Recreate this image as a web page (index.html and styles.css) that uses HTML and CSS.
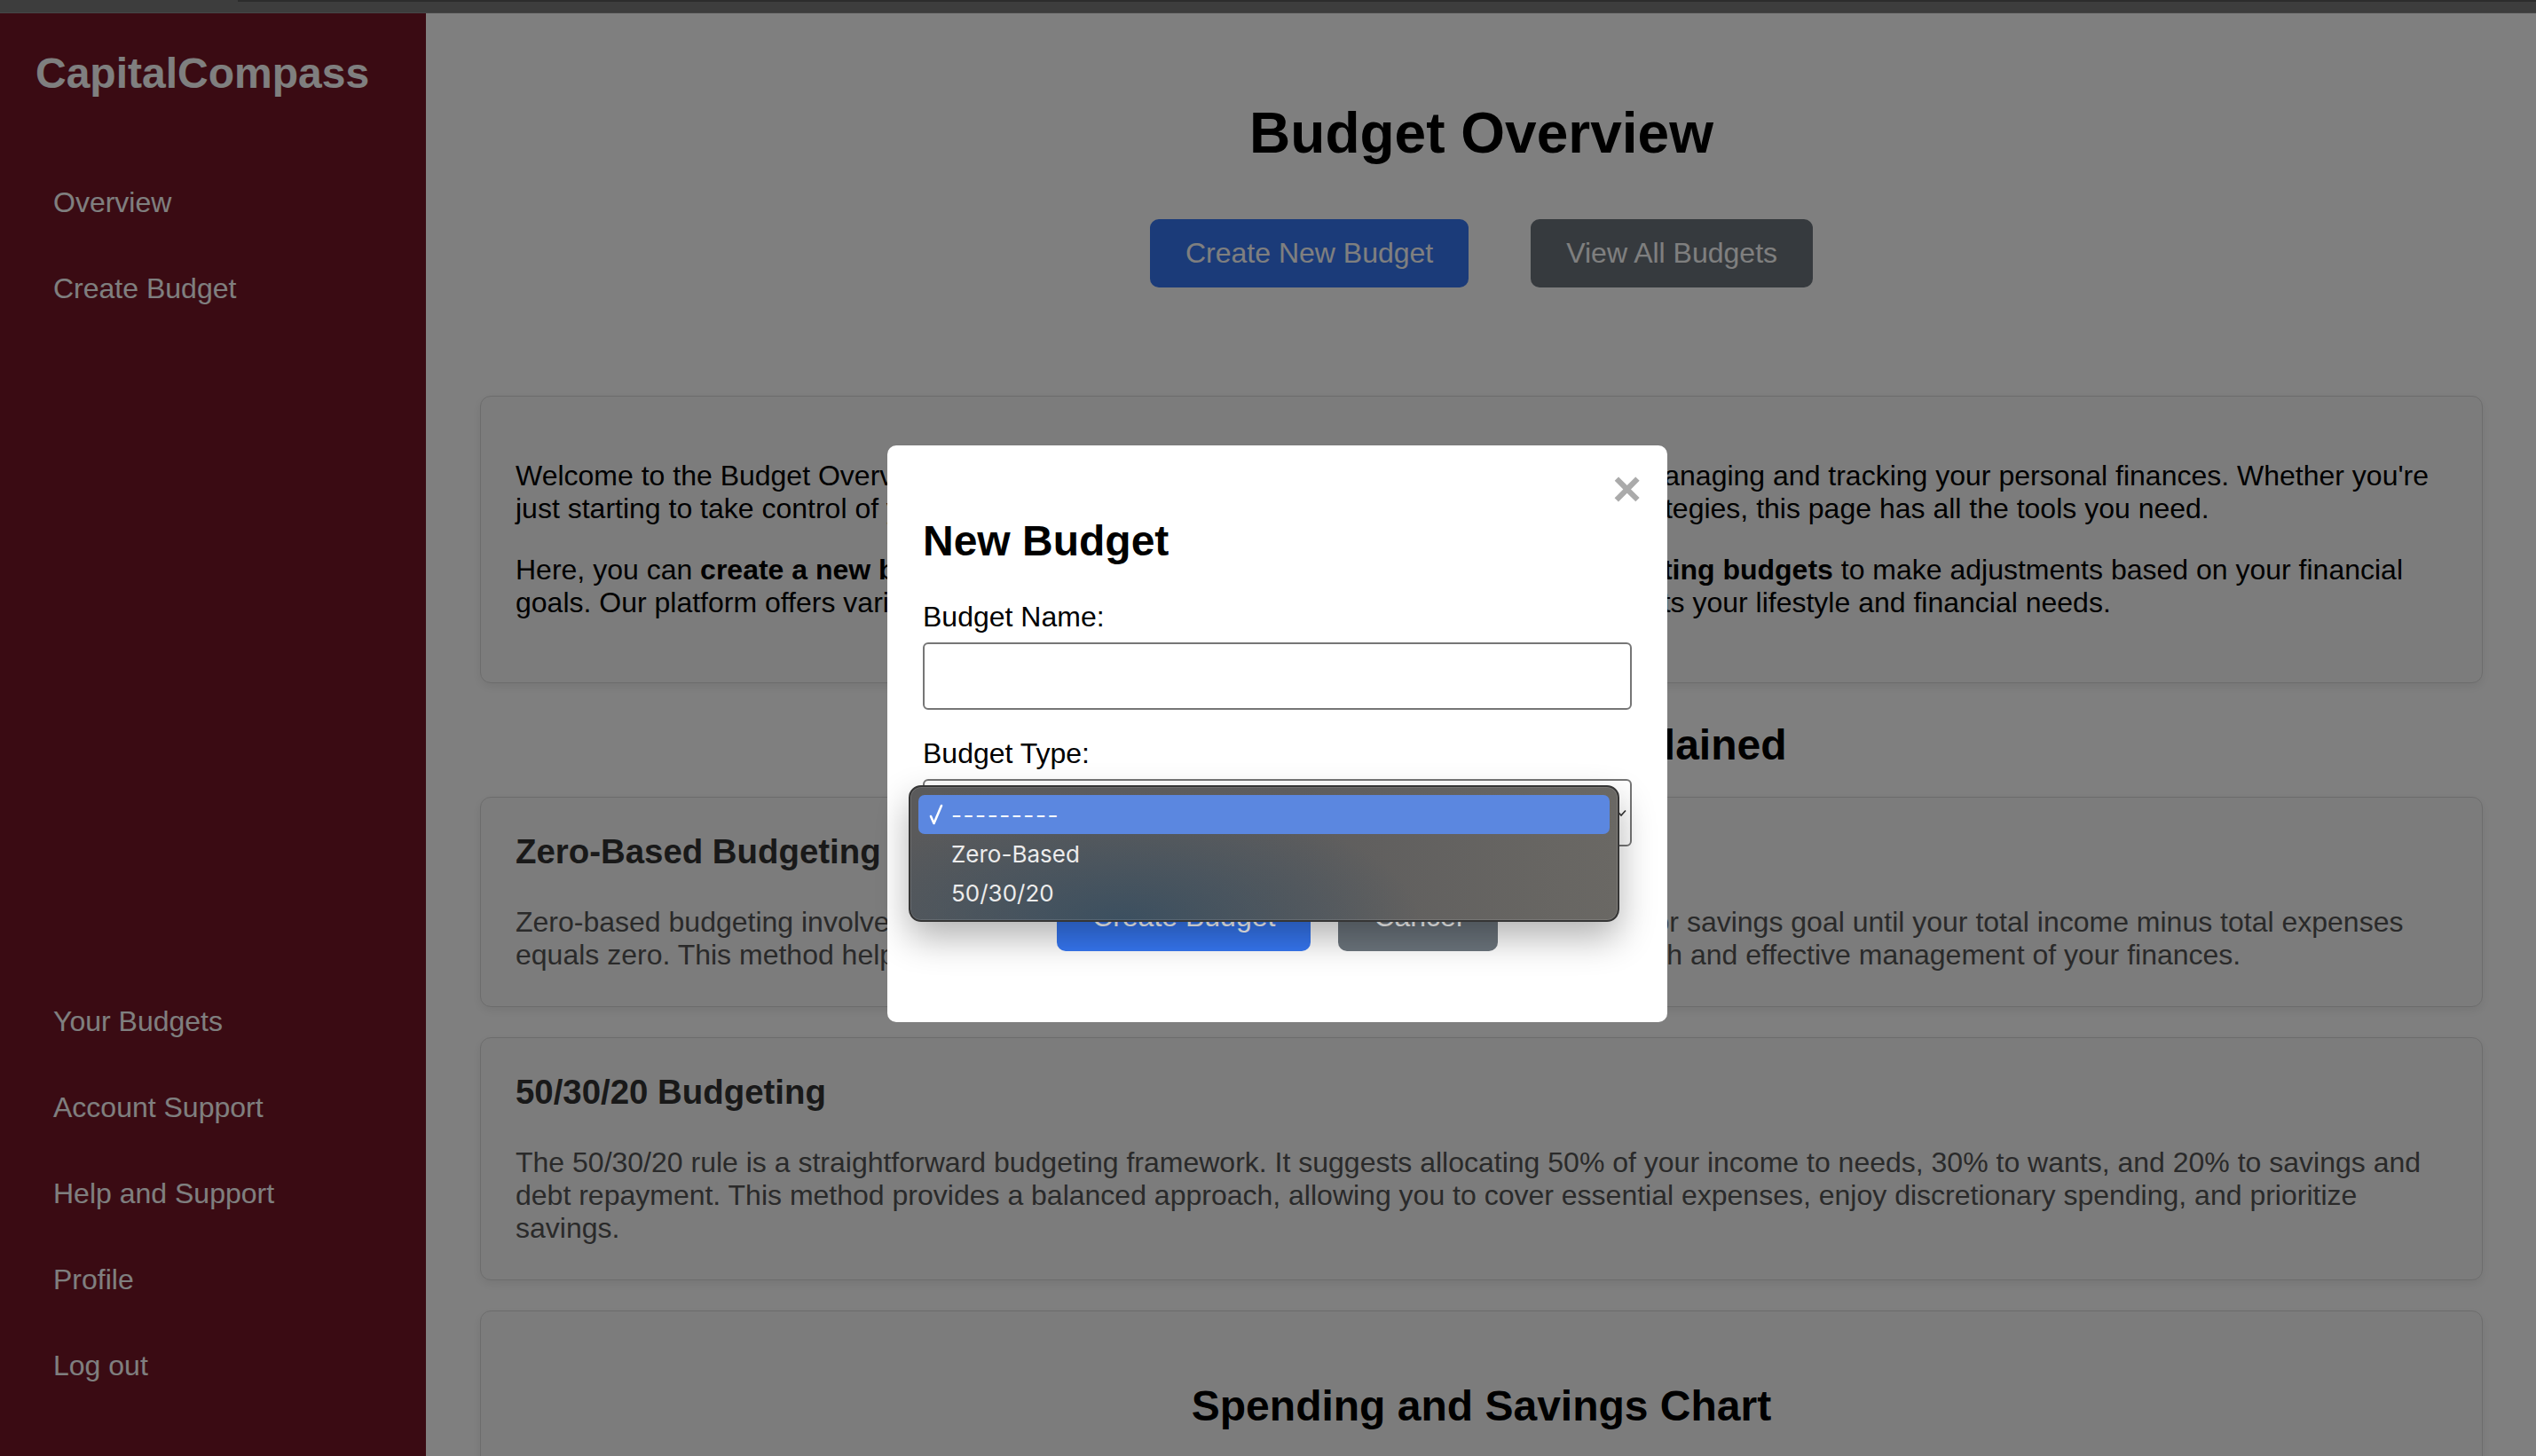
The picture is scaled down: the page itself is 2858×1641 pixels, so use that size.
FILE: index.html
```html
<!DOCTYPE html>
<html lang="en">
<head>
<meta charset="utf-8">
<title>CapitalCompass – Budget Overview</title>
<link rel="stylesheet" href="styles.css">
</head>
<body>
<div class="chrome"><div class="chrome-line"></div></div>
<div class="app">
  <aside class="sidebar">
    <div class="logo">CapitalCompass</div>
    <nav class="nav nav-top">
      <a href="#">Overview</a>
      <a href="#">Create Budget</a>
    </nav>
    <nav class="nav nav-bottom">
      <a href="#">Your Budgets</a>
      <a href="#">Account Support</a>
      <a href="#">Help and Support</a>
      <a href="#">Profile</a>
      <a href="#">Log out</a>
    </nav>
  </aside>
  <main class="content">
    <h1 class="page-title">Budget Overview</h1>
    <div class="actions">
      <button class="btn btn-primary">Create New Budget</button>
      <button class="btn btn-secondary">View All Budgets</button>
    </div>
    <section class="card intro">
      <p>Welcome to the Budget Overview page, your comprehensive one-stop solution for simply managing and tracking your personal finances. Whether you're just starting to take control of your personal finances or looking to refine your budgeting strategies, this page has all the tools you need.</p>
      <p>Here, you can <strong>create a new budget</strong>, <strong>view and edit your active budgets</strong>, or <strong>manage existing budgets</strong> to make adjustments based on your financial goals. Our platform offers various budgeting strategies to help you find the one that best suits your lifestyle and financial needs.</p>
    </section>
    <h2 class="section-title">Budgeting Methods Explained</h2>
    <section class="card strategy">
      <h3>Zero-Based Budgeting</h3>
      <p>Zero-based budgeting involves allocating every dollar of your income to an expense, debt, or savings goal until your total income minus total expenses equals zero. This method helps you gain control over your money, promoting financial growth and effective management of your finances.</p>
    </section>
    <section class="card strategy">
      <h3>50/30/20 Budgeting</h3>
      <p>The 50/30/20 rule is a straightforward budgeting framework. It suggests allocating 50% of your income to needs, 30% to wants, and 20% to savings and debt repayment. This method provides a balanced approach, allowing you to cover essential expenses, enjoy discretionary spending, and prioritize savings.</p>
    </section>
    <section class="card chart">
      <h2>Spending and Savings Chart</h2>
    </section>
  </main>
</div>

<div class="backdrop">
  <div class="modal">
    <span class="close">&times;</span>
    <h2>New Budget</h2>
    <form class="modal-form">
      <label class="field-label" for="budget-name">Budget Name:</label>
      <input class="text-input" id="budget-name" type="text">
      <label class="field-label" for="budget-type">Budget Type:</label>
      <div class="select-wrap">
        <select class="select" id="budget-type">
          <option>---------</option>
          <option>Zero-Based</option>
          <option>50/30/20</option>
        </select>
        <svg class="select-arrow" width="12" height="9" viewBox="0 0 12 9"><path d="M1 1.5 L6 7 L11 1.5" fill="none" stroke="#333" stroke-width="1.6"/></svg>
      </div>
      <div class="modal-actions">
        <button type="button" class="btn btn-primary">Create Budget</button>
        <button type="button" class="btn btn-secondary">Cancel</button>
      </div>
    </form>
    <div class="menu">
      <div class="menu-row selected">
        <svg class="check" width="16" height="24" viewBox="0 0 16 24"><path d="M2 14 L5.5 22 L14 2" fill="none" stroke="#fff" stroke-width="2.6" stroke-linecap="round" stroke-linejoin="round"/></svg>
        <span class="dashes">---------</span>
      </div>
      <div class="menu-row">Zero-Based</div>
      <div class="menu-row">50/30/20</div>
    </div>
  </div>
</div>
</body>
</html>
```

FILE: styles.css
```css
* {
  box-sizing: border-box;
}

html,
body {
  margin: 0;
  height: 100%;
}

body {
  font-family: "Liberation Sans", Arial, Helvetica, sans-serif;
  background: #ffffff;
  color: #000000;
  overflow: hidden;
}

/* browser chrome strip */
.chrome {
  height: 15px;
  background: #3d3d3d;
  border-bottom: 1px solid #464646;
}

.chrome-line {
  margin-left: 268px;
  height: 2px;
  background: #2c2c2c;
}

.app {
  display: flex;
  height: calc(100vh - 15px);
}

/* sidebar */
.sidebar {
  width: 480px;
  flex-shrink: 0;
  background: #741626;
  display: flex;
  flex-direction: column;
  padding: 0 40px 53px;
}

.logo {
  margin-top: 40px;
  font-size: 48px;
  font-weight: bold;
  color: #ffffff;
  line-height: normal;
}

.nav {
  display: flex;
  flex-direction: column;
}

.nav-top {
  margin-top: 70px;
}

.nav-bottom {
  margin-top: auto;
}

.nav a {
  display: block;
  padding: 30px 20px;
  font-size: 32px;
  line-height: normal;
  color: #ffffff;
  text-decoration: none;
}

/* main content */
.content {
  flex: 1;
  min-width: 0;
  padding: 0 60px 0 61px;
  overflow: hidden;
}

.page-title {
  margin: 98px 0 60px;
  text-align: center;
  font-size: 64px;
  line-height: normal;
}

.actions {
  display: flex;
  justify-content: center;
  gap: 70px;
}

.btn {
  font-family: inherit;
  font-size: 32px;
  line-height: normal;
  padding: 20px 40px;
  border: none;
  border-radius: 10px;
  color: #ffffff;
}

.btn-primary {
  background: #3677f2;
}

.btn-secondary {
  background: #6c757d;
}

.card {
  background: #f8f8f8;
  border: 1px solid #d9d9d9;
  border-radius: 12px;
  padding: 39px;
  box-shadow: 0 4px 12px rgba(0, 0, 0, 0.08);
}

.intro {
  margin-top: 122px;
}

.intro p {
  margin: 32px 0;
  font-size: 32px;
}

.section-title {
  margin: 42px 0 31px;
  text-align: center;
  font-size: 48px;
  line-height: normal;
}

.strategy {
  margin-bottom: 34px;
}

.strategy h3 {
  margin: 0 0 39px;
  font-size: 38.4px;
  line-height: normal;
  color: #333333;
}

.strategy p {
  margin: 0;
  font-size: 32px;
  color: #555555;
}

.chart h2 {
  margin: 40px 0;
  text-align: center;
  font-size: 48px;
  line-height: normal;
}

/* modal */
.backdrop {
  position: fixed;
  top: 15px;
  left: 0;
  right: 0;
  bottom: 0;
  background: rgba(0, 0, 0, 0.5);
}

.modal {
  position: absolute;
  left: 1000px;
  top: 487px;
  width: 879px;
  padding: 40px;
  background: #ffffff;
  border-radius: 10px;
}

.close {
  position: absolute;
  top: 21px;
  right: 29px;
  font-size: 56px;
  line-height: 56px;
  font-weight: bold;
  color: #aaaaaa;
}

.modal h2 {
  margin: 40px 0;
  font-size: 48px;
  line-height: normal;
}

.modal-form {
  margin: 0 0 40px;
}

.field-label {
  display: block;
  font-size: 32px;
  line-height: normal;
  margin-bottom: 10px;
}

.text-input {
  display: block;
  width: 100%;
  height: 76px;
  margin: 0 0 31px;
  border: 2px solid #767676;
  border-radius: 6px;
  background: #ffffff;
}

.select-wrap {
  position: relative;
  height: 76px;
}

.select {
  display: block;
  width: 100%;
  height: 76px;
  margin: 0;
  padding: 0 20px;
  border: 2px solid #767676;
  border-radius: 6px;
  background: #ffffff;
  font-family: inherit;
  font-size: 28px;
  color: #000000;
  appearance: none;
  -webkit-appearance: none;
}

.select-arrow {
  position: absolute;
  right: 6px;
  top: 34px;
}

.modal-actions {
  display: flex;
  justify-content: center;
  gap: 31px;
  margin-top: 41px;
}

/* open native-style select popup */
.menu {
  position: absolute;
  left: 24px;
  top: 383px;
  width: 801px;
  height: 154px;
  padding: 9px;
  border: 2px solid #353535;
  border-radius: 14px;
  background:
    radial-gradient(ellipse 42% 90% at 30% 100%, rgba(56, 78, 96, 0.9), rgba(56, 78, 96, 0) 100%),
    linear-gradient(90deg, #5a5a5b 0%, #5e5d5d 55%, #6a6864 100%);
  box-shadow: inset 0 0 0 1px rgba(255, 255, 255, 0.12), 0 18px 40px rgba(0, 0, 0, 0.3);
  font-family: Inter, "Noto Sans", sans-serif;
  font-size: 26px;
  color: #ececec;
}

.menu-row {
  position: relative;
  height: 44px;
  display: flex;
  align-items: center;
  padding-left: 37px;
  border-radius: 7px;
}

.menu-row.selected {
  background: #5b87e0;
  color: #ffffff;
}

.check {
  position: absolute;
  left: 12px;
  top: 10px;
}

.dashes {
  letter-spacing: 1.6px;
}
```
